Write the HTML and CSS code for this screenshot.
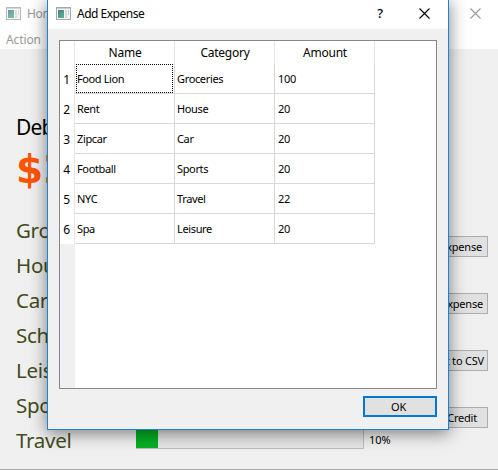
FILE: index.html
```html
<!DOCTYPE html>
<html lang="en">
<head>
<meta charset="utf-8">
<title>Add Expense</title>
<link rel="stylesheet" href="styles.css">
</head>
<body>
<svg width="0" height="0" class="defs">
  <defs>
    <linearGradient id="pane" x1="0" y1="0" x2="0.5" y2="1"><stop offset="0" stop-color="#4777a8"/><stop offset="1" stop-color="#5bb37b"/></linearGradient>
    <symbol id="app" viewBox="0 0 15 13">
      <rect x="0.5" y="0.5" width="14" height="12" fill="#f4f4f4" stroke="#a3a9ad"/>
      <rect x="1" y="1" width="13" height="1" fill="#c6cccf"/>
      <rect x="2" y="3" width="6" height="8" fill="url(#pane)"/>
      <rect x="9" y="3" width="2" height="8" fill="#dadada"/>
      <rect x="12" y="3" width="1" height="5" fill="#c9d0d4"/>
    </symbol>
    <symbol id="close" viewBox="0 0 11 11"><path d="M.5.5l10 10M10.500.5l-10 10" fill="none" stroke="currentColor" stroke-width="1.1"/></symbol>
  </defs>
</svg>
<main class="window">
  <header class="titlebar back-title">
    <svg class="app-icon"><use href="#app"/></svg><span class="title">Home</span>
    <svg class="close"><use href="#close"/></svg>
  </header>
  <nav class="menu"><span>Action</span></nav>
  <section class="content">
    <div class="summary">
      <div class="debit">Debit</div>
      <div class="total">$2</div>
      <ul class="categories">
        <li>Groceries</li><li>House</li><li>Car</li><li>School</li><li>Leisure</li><li>Sports</li>
        <li><span class="name">Travel</span><span class="bar"><span class="fill" style="width:10%"></span></span><span class="percent">10%</span></li>
      </ul>
    </div>
    <div class="actions">
      <button class="add">Add Expense</button>
      <button class="del">Delete Expense</button>
      <button class="csv">Export to CSV</button>
      <button class="credit">Add Credit</button>
    </div>
  </section>
</main>
<section class="dialog">
  <header class="titlebar">
    <svg class="app-icon"><use href="#app"/></svg><span class="title">Add Expense</span>
    <span class="help">?</span>
    <svg class="close"><use href="#close"/></svg>
  </header>
  <div class="table-box">
    <div class="gutter"></div>
    <table>
      <thead><tr><th class="num"></th><th>Name</th><th>Category</th><th>Amount</th></tr></thead>
      <tbody>
        <tr><th class="num">1</th><td class="focus"><span>Food Lion</span></td><td>Groceries</td><td>100</td></tr>
        <tr><th class="num">2</th><td>Rent</td><td>House</td><td>20</td></tr>
        <tr><th class="num">3</th><td>Zipcar</td><td>Car</td><td>20</td></tr>
        <tr><th class="num">4</th><td>Football</td><td>Sports</td><td>20</td></tr>
        <tr><th class="num">5</th><td>NYC</td><td>Travel</td><td>22</td></tr>
        <tr><th class="num">6</th><td>Spa</td><td>Leisure</td><td>20</td></tr>
      </tbody>
    </table>
  </div>
  <footer><button class="ok">OK</button></footer>
</section>
</body>
</html>
```

FILE: styles.css
```css
* { box-sizing: border-box; }
body { margin: 0; width: 498px; height: 470px; overflow: hidden; position: relative; background: #f0f0f0; color: #000; font-family: "Noto Sans", sans-serif; font-size: 11px; }
.defs { position: absolute; }
.window { height: 470px; display: flex; flex-direction: column; border-bottom: 1px solid #aaa; overflow: hidden; }
.titlebar { display: flex; align-items: center; background: #fff; font-size: 12px; }
.app-icon { width: 15px; height: 13px; flex: none; }
.close { width: 11px; height: 11px; flex: none; }
.title { letter-spacing: -0.3px; white-space: nowrap; }
.back-title { height: 27px; padding: 0 17px 0 6px; color: #999; }
.back-title .app-icon { opacity: .8; }
.back-title .title { margin-left: 6px; }
.back-title .close { margin-left: auto; }
.menu { height: 22px; background: #fff; color: #999; font-size: 12px; line-height: 26px; padding-left: 6px; letter-spacing: -0.1px; }
.content { display: flex; flex: 1; justify-content: space-between; }
.summary { width: 410px; padding: 62px 0 0 16px; }
.debit { height: 32px; font-size: 21px; line-height: 32px; letter-spacing: -0.8px; }
.total { height: 54px; color: #f50; font: bold 39px/54px "DejaVu Sans", sans-serif; }
.categories { list-style: none; margin: 16px 0 0; padding: 0; font-size: 20.5px; color: #444b20; letter-spacing: -0.3px; }
.categories li { height: 35px; line-height: 35px; display: flex; align-items: center; }
.name { width: 120px; }
.bar { width: 228px; height: 20px; margin-top: -4px; border: 1px solid #bcbcbc; border-left: 0; background: #e6e6e6; display: flex; }
.fill { background: #06b025; max-width: 22px; }
.percent { margin: -2px 0 0 5px; font-size: 11px; color: #000; letter-spacing: 0; }
button { font: 11px/19px "Noto Sans", sans-serif; letter-spacing: -0.2px; color: #000; background: #e1e1e1; border: 1px solid #adadad; border-radius: 0; margin: 0; padding: 0; height: 21px; }
.actions { width: 78px; margin-right: 10px; padding-top: 187px; display: flex; flex-direction: column; gap: 36px; }
.actions button { white-space: nowrap; display: flex; justify-content: flex-end; }
.actions .add { padding-right: 5px; }
.actions .del { padding-right: 4px; }
.actions .csv { padding-right: 3px; letter-spacing: -0.2px; }
.actions .credit { padding-right: 10px; }
.dialog { position: absolute; left: 47px; top: -1px; width: 402px; height: 431px; background: #f0f0f0; border: 1px solid #1883d7; box-shadow: 0 3px 16px rgba(0,0,0,.5); display: flex; flex-direction: column; }
.dialog .titlebar { height: 29px; flex: none; padding: 0 18px 3px 8px; }
.dialog .title { margin-left: 6px; letter-spacing: -0.5px; }
.help { margin-left: auto; margin-right: 36px; font-size: 13px; font-weight: 500; }
.table-box { width: 378px; height: 349px; margin: 11px 0 0 11px; border: 1px solid #828790; background: #fff; display: flex; flex: none; }
.gutter { width: 15px; flex: none; background: #f0f0f0; }
table { border-collapse: separate; border-spacing: 0; table-layout: fixed; width: 315px; height: 203px; margin-left: -15px; flex: none; }
tr { height: 30px; }
thead tr { height: 23px; }
th, td { width: 100px; padding: 0; background: #fff; border-right: 1px solid #d8d8d8; text-align: left; font-weight: 400; }
th { font-size: 12px; letter-spacing: -0.25px; border-color: #e5e5e5; text-align: center; padding-left: 1px; }
.num { width: 15px; padding: 0 1px 0 0; }
td { border-bottom: 1px solid #d8d8d8; padding: 0 0 1px 2px; letter-spacing: -0.35px; }
td:last-child { padding-left: 3px; }
.focus { padding: 0 1px 0 1px; }
.focus span { display: block; height: 29px; line-height: 28px; border: 1px dotted #000; padding-left: 0; letter-spacing: -0.4px; }
footer { display: flex; justify-content: flex-end; padding: 7px 11px 0 0; }
.ok { width: 74px; height: 21px; padding-right: 3px; border: 2px solid #0078d7; line-height: 17px; letter-spacing: -0.3px; }
```
